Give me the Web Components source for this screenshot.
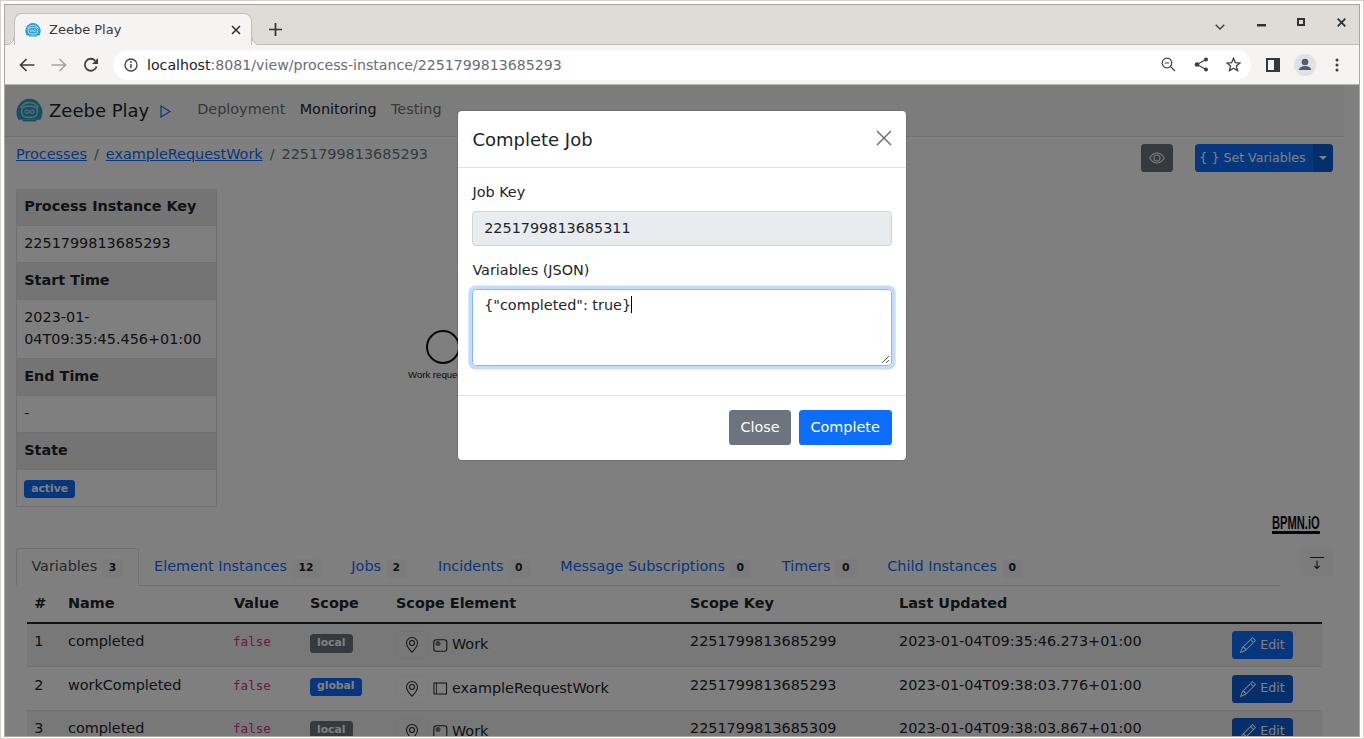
<!DOCTYPE html>
<html>
<head>
<meta charset="utf-8">
<title>Zeebe Play</title>
<style>
  html, body { margin: 0; height: 100%; overflow: hidden; background: #fff; }
  body { font: 14.4px/1.5 "DejaVu Sans", sans-serif; color: #212529; }
</style>
</head>
<body>
<browser-window>
  <app-navbar></app-navbar>
  <page-toolbar></page-toolbar>
  <div style="display:flex;height:359px;margin:17px 11px 0">
    <instance-info></instance-info>
    <bpmn-canvas></bpmn-canvas>
  </div>
  <detail-tabs></detail-tabs>
  <variables-table></variables-table>
  <complete-job-modal slot="overlay"></complete-job-modal>
</browser-window>

<script>
const ICONS = {
  pin: '<path d="M12.166 8.94c-.524 1.062-1.234 2.12-1.96 3.07A31.493 31.493 0 0 1 8 14.58a31.481 31.481 0 0 1-2.206-2.57c-.726-.95-1.436-2.008-1.96-3.07C3.304 7.867 3 6.862 3 6a5 5 0 0 1 10 0c0 .862-.305 1.867-.834 2.94zM8 16s6-5.686 6-10A6 6 0 0 0 2 6c0 4.314 6 10 6 10z"/><path d="M8 8a2 2 0 1 1 0-4 2 2 0 0 1 0 4zm0 1a3 3 0 1 0 0-6 3 3 0 0 0 0 6z"/>',
  pencil: '<path d="M12.146.146a.5.5 0 0 1 .708 0l3 3a.5.5 0 0 1 0 .708l-10 10a.5.5 0 0 1-.168.11l-5 2a.5.5 0 0 1-.65-.65l2-5a.5.5 0 0 1 .11-.168l10-10zM11.207 2.5 13.5 4.793 14.793 3.5 12.5 1.207 11.207 2.5zm1.586 3L10.5 3.207 4 9.707V10h.5a.5.5 0 0 1 .5.5v.5h.5a.5.5 0 0 1 .5.5v.5h.293l6.5-6.5zm-9.761 5.175-.106.106-1.528 3.821 3.821-1.528.106-.106A.5.5 0 0 1 5 12.5V12h-.5a.5.5 0 0 1-.5-.5V11h-.5a.5.5 0 0 1-.468-.325z"/>',
  eye: '<path d="M16 8s-3-5.5-8-5.5S0 8 0 8s3 5.5 8 5.5S16 8 16 8zM1.173 8a13.133 13.133 0 0 1 1.66-2.043C4.12 4.668 5.88 3.5 8 3.5c2.12 0 3.879 1.168 5.168 2.457A13.133 13.133 0 0 1 14.828 8c-.058.087-.122.183-.195.288-.335.48-.83 1.12-1.465 1.755C11.879 11.332 10.119 12.5 8 12.5c-2.12 0-3.879-1.168-5.168-2.457A13.134 13.134 0 0 1 1.172 8z"/><path d="M8 5.5a2.5 2.5 0 1 0 0 5 2.5 2.5 0 0 0 0-5zM4.5 8a3.5 3.5 0 1 1 7 0 3.5 3.5 0 0 1-7 0z"/>'
};

function icon(name, size) {
  return `<svg width="${size}" height="${size}" viewBox="0 0 16 16" fill="currentColor">${ICONS[name]}</svg>`;
}

// robot head logo, used for favicon and navbar
function zeebeLogo(size, c1, c2) {
  return `<svg width="${size}" height="${size}" viewBox="0 0 32 32">
    <path d="M3 27 C0 21 0 16 2 12 C5 5 10 2 16 2 C22 2 27 5 30 12 C32 16 32 21 29 27 Z" fill="${c1}"/>
    <path d="M5.500 13 C8 8 12 6.500 16 6.500 C20 6.500 24 8 26.500 13" fill="none" stroke="${c2}" stroke-width="1.600"/>
    <rect x="6.500" y="11" width="19" height="13" rx="6" fill="none" stroke="${c2}" stroke-width="1.600"/>
    <path d="M16 17.500 C14 14.800 10.500 15 10.500 17.500 C10.500 20 14 20.200 16 17.500 C18 14.800 21.500 15 21.500 17.500 C21.500 20 18 20.200 16 17.500Z" fill="none" stroke="${c2}" stroke-width="1.300"/>
    <path d="M8 28 H24" stroke="${c1}" stroke-width="2"/>
  </svg>`;
}

class BrowserWindow extends HTMLElement {
  constructor() {
    super();
    this.attachShadow({ mode: "open" });
  }

  connectedCallback() {
    this.shadowRoot.innerHTML = `
      <style>
        :host { display: block; box-sizing: border-box; width: 1364px; height: 739px; padding: 2px; border: 1px solid #d6d3ce; background: #fff; }
        .frame { box-sizing: border-box; height: 100%; margin: 1px; border: 1px solid #a9a7a3; display: flex; flex-direction: column; overflow: hidden; }
        .titlebar { height: 40px; flex: none; display: flex; background: #dfdcd8; border-bottom: 1px solid #bdbbb7; box-sizing: border-box; color: #2f3336; position: relative; }
        .tab { position: relative; margin: 8px 0 -1px 9px; width: 238px; box-sizing: border-box; background: #f5f4f2; border: 1px solid #c2c0bc; border-bottom: 0; border-radius: 8px 8px 0 0; display: flex; align-items: center; padding: 0 10px 0 10px; font: 13px "DejaVu Sans", sans-serif; color: #35393c; }
        .tab span { margin-left: 8px; flex: 1; }
        .tab::before, .tab::after { content: ""; position: absolute; bottom: 0; width: 8px; height: 8px; }
        .tab::before { left: -9px; background: radial-gradient(circle at 0 0, transparent 7.5px, #c2c0bc 7.5px, #c2c0bc 8.5px, #f5f4f2 8.5px); }
        .tab::after { right: -9px; background: radial-gradient(circle at 100% 0, transparent 7.5px, #c2c0bc 7.5px, #c2c0bc 8.5px, #f5f4f2 8.5px); }
        .plus { margin: 8px 0 0 17px; width: 18px; height: 32px; display: flex; align-items: center; }
        .controls { margin-left: auto; display: flex; align-items: center; gap: 0; }
        .controls svg { display: block; }
        .controls .c { width: 40px; display: flex; justify-content: center; }
        .toolbar { height: 39px; flex: none; background: #f5f4f2; border-bottom: 1px solid #b7b5b1; box-sizing: content-box; display: flex; align-items: center; color: #3c4043; }
        .nav { width: 32px; display: flex; justify-content: center; }
        .nav:first-child { margin-left: 6px; }
        .url { margin-left: 6px; width: 1138px; height: 30px; border-radius: 15px; background: #fff; display: flex; align-items: center; font: 14.17px "DejaVu Sans", sans-serif; color: #6a6e72; }
        .url b { font-weight: normal; color: #202124; }
        .url .info { margin: 0 9px 0 11px; display: flex; }
        .url .right { margin-left: auto; display: flex; gap: 14px; padding-right: 10px; }
        .tools { display: flex; align-items: center; margin-left: 15px; gap: 14px; }
        .page { flex: 1; position: relative; overflow: hidden; background: #fff; min-height: 0; }
        .inner { padding-right: 15px; }
        svg { display: block; }
      </style>
      <div class="frame">
        <div class="titlebar">
          <div class="tab">
            ${zeebeLogo(16, "#2b9fd6", "#cfeefb")}
            <span>Zeebe Play</span>
            <svg width="10" height="10" viewBox="0 0 10 10"><path d="M1 1 9 9M9 1 1 9" stroke="#2f3336" stroke-width="1.600"/></svg>
          </div>
          <div class="plus"><svg width="13" height="13" viewBox="0 0 13 13"><path d="M6.500 0V13M0 6.500H13" stroke="#2f3336" stroke-width="1.700"/></svg></div>
          <div class="controls">
            <div class="c" style="margin:4px 1px 0 0"><svg width="10" height="6" viewBox="0 0 10 6"><path d="M.7.7 5 5 9.300.7" fill="none" stroke="#3c4043" stroke-width="1.400"/></svg></div>
            <div class="c" style="margin-top:2px"><svg width="9" height="3" viewBox="0 0 9 3"><rect width="9" height="2.500" fill="#2f3336"/></svg></div>
            <div class="c" style="margin-bottom:5px"><svg width="8" height="8" viewBox="0 0 8 8"><rect x="1" y="1" width="6" height="6" fill="none" stroke="#2f3336" stroke-width="2"/></svg></div>
            <div class="c" style="margin:0 -2px 5px 0"><svg width="9" height="9" viewBox="0 0 9 9"><path d="M.7.7 8.300 8.300M8.300.7.7 8.300" stroke="#2f3336" stroke-width="1.800"/></svg></div>
          </div>
        </div>
        <div class="toolbar">
          <div class="nav"><svg width="16" height="14" viewBox="0 0 16 14"><path d="M7.500 1 1.500 7l6 6M2 7h13.500" fill="none" stroke="#3c4043" stroke-width="1.700"/></svg></div>
          <div class="nav"><svg width="16" height="14" viewBox="0 0 16 14"><path d="M8.500 1l6 6-6 6M14 7H.5" fill="none" stroke="#a4a6a8" stroke-width="1.700"/></svg></div>
          <div class="nav"><svg width="16" height="16" viewBox="0 0 16 16"><path d="M13.600 9.500A6 6 0 1 1 12.200 3.600" fill="none" stroke="#3c4043" stroke-width="1.800"/><path d="M15 1v6H9z" fill="#3c4043"/></svg></div>
          <div class="url">
            <div class="info"><svg width="14" height="14" viewBox="0 0 14 14"><circle cx="7" cy="7" r="6" fill="none" stroke="#3c4043" stroke-width="1.300"/><path d="M7 6v4.300" stroke="#3c4043" stroke-width="1.400"/><circle cx="7" cy="4" r=".9" fill="#3c4043"/></svg></div>
            <b>localhost</b>:8081/view/process-instance/2251799813685293
            <div class="right">
              <svg width="15" height="15" viewBox="0 0 15 15"><circle cx="6" cy="6" r="4.800" fill="none" stroke="#3c4043" stroke-width="1.200"/><path d="M3.800 6h4.400M9.500 9.500 14 14" stroke="#3c4043" stroke-width="1.200"/></svg>
              <svg width="15" height="15" viewBox="0 0 15 15" style="margin-left:4px"><path d="M12 2.500 3 7.500l9 5" fill="none" stroke="#3c4043" stroke-width="1.200"/><circle cx="12" cy="2.500" r="2" fill="#3c4043"/><circle cx="3" cy="7.500" r="2.300" fill="#3c4043"/><circle cx="12" cy="12.500" r="2" fill="#3c4043"/></svg>
              <svg width="15" height="15" viewBox="0 0 15 15" style="margin-left:3px"><path d="M7.500 1.300 9.300 5.600 14 6 10.400 9 11.500 13.600 7.500 11.200 3.500 13.600 4.600 9 1 6 5.700 5.600Z" fill="none" stroke="#3c4043" stroke-width="1.300"/></svg>
            </div>
          </div>
          <div class="tools">
            <svg width="14" height="14" viewBox="0 0 14 14"><rect x="1" y="1" width="12" height="12" fill="none" stroke="#35393c" stroke-width="2"/><rect x="8" y="1" width="5" height="12" fill="#35393c"/></svg>
            <svg width="22" height="22" viewBox="0 0 22 22"><circle cx="11" cy="11" r="11" fill="#dfe1e5"/><circle cx="11" cy="8" r="3.300" fill="#4f5c71"/><path d="M4.800 16c.6-3 3-4 6.200-4s5.600 1 6.200 4z" fill="#4f5c71"/></svg>
            <svg width="4" height="14" viewBox="0 0 4 14" style="margin-left:5px"><circle cx="2" cy="2" r="1.500" fill="#3c4043"/><circle cx="2" cy="7" r="1.500" fill="#3c4043"/><circle cx="2" cy="12" r="1.500" fill="#3c4043"/></svg>
          </div>
        </div>
        <div class="page">
          <div class="inner"><slot></slot></div>
          <slot name="overlay"></slot>
        </div>
      </div>
    `;
  }
}

class AppNavbar extends HTMLElement {
  constructor() {
    super();
    this.attachShadow({ mode: "open" });
  }

  connectedCallback() {
    this.shadowRoot.innerHTML = `
      <style>
        :host { display: flex; align-items: center; height: 51px; background: #f8f9fa; border-bottom: 1px solid #dee2e6; padding-left: 11px; }
        .brand { display: flex; align-items: center; font-size: 18px; color: #212529; }
        .brand span { margin-left: 6px; }
        .play { margin-left: 11px; margin-top: 2px; }
        nav { display: flex; gap: 14.4px; margin-left: 26px; margin-top: -1px; color: #6e7071; }
        .on { color: #212529; }
      </style>
      <div class="brand">
        ${zeebeLogo(27, "#2f9fc4", "#a7dcea")}
        <span>Zeebe Play</span>
        <svg class="play" width="11" height="13" viewBox="0 0 11 13"><path d="M1 1v11l9-5.500z" fill="none" stroke="#0d6efd" stroke-width="1.200"/></svg>
      </div>
      <nav><span>Deployment</span><span class="on">Monitoring</span><span>Testing</span></nav>
    `;
  }
}

class PageToolbar extends HTMLElement {
  constructor() {
    super();
    this.attachShadow({ mode: "open" });
  }

  connectedCallback() {
    this.shadowRoot.innerHTML = `
      <style>
        :host { display: flex; height: 28px; padding: 7px 11px 0; align-items: flex-start; }
        .crumbs { color: #6c757d; line-height: 21.6px; }
        a { color: #0d6efd; text-decoration: underline; }
        i { font-style: normal; padding: 0 7px; }
        .eye { margin-left: auto; width: 32px; height: 28px; border-radius: 3.6px; background: #6c757d; color: #fff; display: flex; align-items: center; justify-content: center; }
        .split { margin-left: 22px; display: flex; height: 28px; color: #fff; font-size: 12.6px; }
        .main { width: 118px; box-sizing: border-box; padding-right: 3px; background: #0d6efd; border-radius: 3.6px 0 0 3.6px; display: flex; align-items: center; justify-content: center; }
        .drop { width: 20px; background: #0b5ed7; border-radius: 0 3.6px 3.6px 0; display: flex; align-items: center; justify-content: center; }
        .drop::after { content: ""; border: 4px solid transparent; border-top-color: #fff; border-bottom: 0; }
      </style>
      <div class="crumbs"><a>Processes</a><i>/</i><a>exampleRequestWork</a><i>/</i>2251799813685293</div>
      <div class="eye">${icon("eye", 16)}</div>
      <div class="split"><div class="main">{ } Set Variables</div><div class="drop"></div></div>
    `;
  }
}

class InstanceInfo extends HTMLElement {
  constructor() {
    super();
    this.attachShadow({ mode: "open" });
  }

  connectedCallback() {
    const rows = [
      ["Process Instance Key", "2251799813685293"],
      ["Start Time", "2023-01-04T09:35:45.456+01:00"],
      ["End Time", "-"],
      ["State", '<state-badge color="#0d6efd">active</state-badge>']
    ];
    this.shadowRoot.innerHTML = `
      <style>
        :host { display: block; flex: none; width: 201px; align-self: flex-start; }
        .th, .td { border: 1px solid #dee2e6; border-top: 0; padding: 7.2px; overflow-wrap: anywhere; min-height: 21.6px; }
        .th { background: #e9e9e9; font-weight: bold; }
        .th:first-child { border-top: 1px solid #dee2e6; }
        .nb { height: 22px; display: flex; align-items: center; padding-top: 3px; box-sizing: border-box; }
      </style>
      ${rows.map(([k, v]) => `<div class="th">${k}</div><div class="td">${
        v.startsWith("<") ? `<div class="nb">${v}</div>` :
        v.startsWith("2023") ? "2023-01-<br>04T09:35:45.456+01:00" : v}</div>`).join("")}
    `;
  }
}

class StateBadge extends HTMLElement {
  constructor() {
    super();
    this.attachShadow({ mode: "open" });
  }

  connectedCallback() {
    const bg = this.getAttribute("color") || "#6c757d";
    this.shadowRoot.innerHTML = `
      <style>
        :host { display: inline-block; background: ${bg}; color: #fff; font: bold 10.8px/1 "DejaVu Sans", sans-serif; padding: 3.8px 7px; border-radius: 3.6px; white-space: nowrap; }
      </style>
      <slot></slot>
    `;
  }
}

class BpmnCanvas extends HTMLElement {
  constructor() {
    super();
    this.attachShadow({ mode: "open" });
  }

  connectedCallback() {
    this.shadowRoot.innerHTML = `
      <style>
        :host { display: block; flex: 1; position: relative; }
        .start { position: absolute; left: 209px; top: 141px; width: 30px; height: 30px; border: 2px solid #111; border-radius: 50%; }
        .label { position: absolute; left: 191px; top: 180px; font: 9.600px/12px "Liberation Sans", sans-serif; color: #111; white-space: nowrap; }
        .logo { position: absolute; right: 13px; top: 326px; width: 48px; font: bold 18px/16px "Liberation Sans", sans-serif; color: #111; border-bottom: 3px solid #111; }
        .logo span { display: inline-block; transform: scaleX(.62); transform-origin: left; white-space: nowrap; }
      </style>
      <div class="start"></div>
      <div class="label">Work requested</div>
      <div class="logo"><span>BPMN.iO</span></div>
    `;
  }
}

class TabLink extends HTMLElement {
  constructor() {
    super();
    this.attachShadow({ mode: "open" });
  }

  connectedCallback() {
    const active = this.hasAttribute("active");
    this.shadowRoot.innerHTML = `
      <style>
        :host { display: block; height: 38px; box-sizing: border-box; padding: 7.2px 14.4px 0; border: 1px solid ${active ? "#dee2e6" : "transparent"}; border-bottom: 1px solid ${active ? "#fff" : "transparent"}; border-radius: 3.6px 3.6px 0 0; color: ${active ? "#495057" : "#0d6efd"}; white-space: nowrap; margin-bottom: -1px; }
        b { display: inline-block; margin-left: 4.600px; background: #f8f9fa; color: #212529; font-size: 10.8px; line-height: 10.8px; padding: 3.800px 7px; border-radius: 3.6px; vertical-align: 0; }
      </style>
      <slot></slot><b>${this.getAttribute("count")}</b>
    `;
  }
}

class DetailTabs extends HTMLElement {
  constructor() {
    super();
    this.attachShadow({ mode: "open" });
  }

  connectedCallback() {
    const tabs = [["Variables", 3], ["Element Instances", 12], ["Jobs", 2], ["Incidents", 0], ["Message Subscriptions", 0], ["Timers", 0], ["Child Instances", 0]];
    this.shadowRoot.innerHTML = `
      <style>
        :host { display: flex; margin: 0 11px; align-items: flex-start; }
        .tabs { flex: 1; display: flex; height: 38px; box-sizing: border-box; border-bottom: 1px solid #dee2e6; }
        .collapse { margin-left: 20px; width: 33px; height: 28px; background: #f8f9fa; border-radius: 3.6px; display: flex; justify-content: center; align-items: flex-start; padding-top: 9px; box-sizing: border-box; }
      </style>
      <div class="tabs">
        ${tabs.map(([t, n], i) => `<tab-link count="${n}" ${i === 0 ? "active" : ""}>${t}</tab-link>`).join("")}
      </div>
      <div class="collapse"><svg width="14" height="13" viewBox="0 0 14 13"><path d="M0 .5H14" stroke="#212529"/><path d="M7 3.500V11.500M4.300 8.800 7 11.500 9.700 8.800" fill="none" stroke="#212529" stroke-width="1.100"/></svg></div>
    `;
  }
}

class VariablesTable extends HTMLElement {
  constructor() {
    super();
    this.attachShadow({ mode: "open" });
  }

  connectedCallback() {
    const rows = [
      [1, "completed", "local", "task", "Work", "2251799813685299", "2023-01-04T09:35:46.273+01:00"],
      [2, "workCompleted", "global", "process", "exampleRequestWork", "2251799813685293", "2023-01-04T09:38:03.776+01:00"],
      [3, "completed", "local", "task", "Work", "2251799813685309", "2023-01-04T09:38:03.867+01:00"]
    ];
    const taskIcon = `<svg width="15" height="15" viewBox="0 0 15 15"><rect x=".8" y="1.800" width="13" height="11.500" rx="2.500" fill="none" stroke="#212529" stroke-width="1.100"/><circle cx="5" cy="5.500" r="2.500" fill="#777"/></svg>`;
    const processIcon = `<svg width="15" height="15" viewBox="0 0 15 15"><rect x="1" y="2" width="12.500" height="11" fill="none" stroke="#212529" stroke-width="1"/><path d="M3.500 2V13" stroke="#212529" stroke-width=".8"/></svg>`;
    this.shadowRoot.innerHTML = `
      <style>
        :host { display: block; margin: 0 11px 0 22px; }
        table { border-collapse: collapse; table-layout: fixed; width: 1295px; }
        th, td { text-align: left; padding: 7.2px; vertical-align: top; }
        th { border-bottom: 2px solid #212529; }
        td { border-bottom: 1px solid #dee2e6; height: 28px; }
        tr:nth-child(odd) td { background: #f0f0f0; }
        code { font: 12.6px/21.6px "DejaVu Sans Mono", monospace; color: #d63384; display: block; margin-left: -1px; }
        .tag { margin-top: 3px; display: block; line-height: 0; }
        .el { display: flex; align-items: center; gap: 5px; }
        .el span { margin-left: -1px; }
        .pin { width: 32px; height: 28px; box-sizing: border-box; border: 1px solid rgba(0, 0, 0, .03); border-radius: 3.6px; display: flex; align-items: center; justify-content: center; }
        .edit { width: 61px; height: 28px; background: #0d6efd; color: #fff; border-radius: 3.6px; font-size: 12.6px; display: flex; align-items: center; justify-content: center; gap: 4px; }
        tr:nth-child(2) .edit, tr:nth-child(3) .edit { background: #0b5ed7; }
      </style>
      <table>
        <colgroup><col style="width:33.8px"><col style="width:166px"><col style="width:76px"><col style="width:86px"><col style="width:294px"><col style="width:209px"><col style="width:333px"><col></colgroup>
        <thead><tr><th>#</th><th>Name</th><th>Value</th><th>Scope</th><th>Scope Element</th><th>Scope Key</th><th>Last Updated</th><th></th></tr></thead>
        <tbody>
          ${rows.map(r => `<tr>
            <td>${r[0]}</td><td>${r[1]}</td><td><code>false</code></td>
            <td><span class="tag"><state-badge color="${r[2] === "global" ? "#0d6efd" : "#6c757d"}">${r[2]}</state-badge></span></td>
            <td><div class="el"><div class="pin">${icon("pin", 16)}</div>${r[3] === "task" ? taskIcon : processIcon}<span>${r[4]}</span></div></td>
            <td>${r[5]}</td><td>${r[6]}</td>
            <td><div class="edit">${icon("pencil", 16)}<span>Edit</span></div></td>
          </tr>`).join("")}
        </tbody>
      </table>
    `;
  }
}

class CompleteJobModal extends HTMLElement {
  constructor() {
    super();
    this.attachShadow({ mode: "open" });
  }

  connectedCallback() {
    this.shadowRoot.innerHTML = `
      <style>
        :host { position: absolute; inset: 0; background: rgba(0, 0, 0, .5); display: flex; justify-content: center; align-items: flex-start; }
        .dialog { margin-top: 26px; width: 448px; background: #fff; border-radius: 4px; box-sizing: border-box; color: #212529; box-shadow: 0 0 0 1px rgba(0, 0, 0, .1); }
        header { height: 57px; box-sizing: border-box; border-bottom: 1px solid #dee2e6; display: flex; align-items: center; justify-content: space-between; padding: 0 14px 0 14.4px; font-size: 18px; }
        header svg { margin-top: -2px; }
        .body { padding: 14.4px 14.4px 29px; }
        label { display: block; line-height: 21.6px; margin-bottom: 7.2px; }
        .input, .area { box-sizing: border-box; border: 1px solid #ced4da; border-radius: 3.6px; padding: 0 10.8px; }
        .input { height: 35px; background: #e9ecef; line-height: 33px; margin-bottom: 13.9px; }
        .area { height: 77px; border-color: #86b7fe; box-shadow: 0 0 0 3.6px rgba(13, 110, 253, .25); position: relative; padding-top: 4.900px; line-height: 21.6px; }
        .caret { display: inline-block; width: 1px; height: 17px; background: #000; vertical-align: -3px; }
        .grip { position: absolute; right: 1px; bottom: 1px; }
        footer { border-top: 1px solid #dee2e6; padding: 14.4px; display: flex; justify-content: flex-end; gap: 8px; }
        .btn { height: 35px; border-radius: 3.6px; color: #fff; line-height: 35px; text-align: center; }
        .close { background: #6c757d; width: 62px; padding-left: 1px; box-sizing: border-box; }
        .ok { background: #0d6efd; width: 93px; }
      </style>
      <div class="dialog">
        <header>Complete Job<svg width="16" height="16" viewBox="0 0 16 16"><path d="M1 1 15 15M15 1 1 15" stroke="#6f7275" stroke-width="1.500"/></svg></header>
        <div class="body">
          <label>Job Key</label>
          <div class="input">2251799813685311</div>
          <label>Variables (JSON)</label>
          <div class="area">{"completed": true}<span class="caret"></span>
            <svg class="grip" width="9" height="9" viewBox="0 0 9 9"><path d="M1 8 8 1M5 8 8 5" stroke="#555" stroke-width="1"/></svg>
          </div>
        </div>
        <footer><div class="btn close">Close</div><div class="btn ok">Complete</div></footer>
      </div>
    `;
  }
}

customElements.define("browser-window", BrowserWindow);
customElements.define("app-navbar", AppNavbar);
customElements.define("page-toolbar", PageToolbar);
customElements.define("instance-info", InstanceInfo);
customElements.define("state-badge", StateBadge);
customElements.define("bpmn-canvas", BpmnCanvas);
customElements.define("tab-link", TabLink);
customElements.define("detail-tabs", DetailTabs);
customElements.define("variables-table", VariablesTable);
customElements.define("complete-job-modal", CompleteJobModal);
</script>
</body>
</html>
